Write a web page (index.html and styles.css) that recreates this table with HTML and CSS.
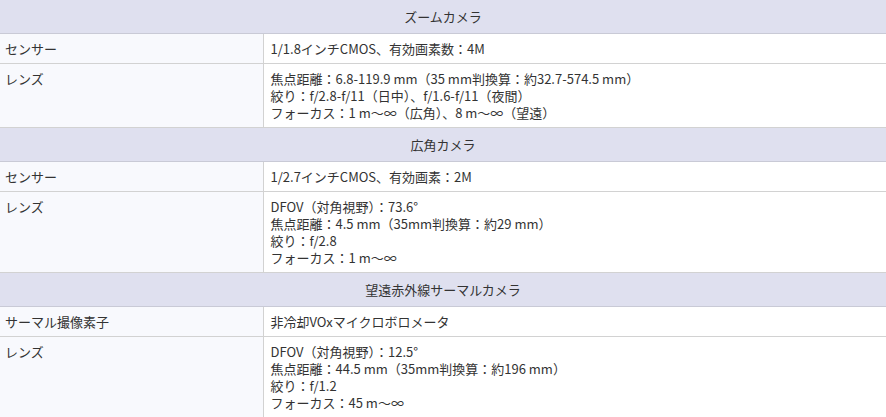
FILE: index.html
```html
<!DOCTYPE html>
<html lang="ja">
<head>
<meta charset="utf-8">
<link rel="stylesheet" href="styles.css">
</head>
<body>
<table class="spec">
  <colgroup>
    <col class="col-label">
    <col class="col-value">
  </colgroup>
  <tbody>
    <tr class="head"><th colspan="2">ズームカメラ</th></tr>
    <tr><td class="label">センサー</td><td class="value">1/1.8インチCMOS、有効画素数：4M</td></tr>
    <tr><td class="label">レンズ</td><td class="value"><div>焦点距離：6.8-119.9 mm（35 mm判換算：約32.7-574.5 mm）</div><div>絞り：f/2.8-f/11（日中）、f/1.6-f/11（夜間）</div><div>フォーカス：1 m～∞（広角）、8 m～∞（望遠）</div></td></tr>
    <tr class="head"><th colspan="2">広角カメラ</th></tr>
    <tr><td class="label">センサー</td><td class="value">1/2.7インチCMOS、有効画素：2M</td></tr>
    <tr><td class="label">レンズ</td><td class="value"><div>DFOV（対角視野）：73.6°</div><div>焦点距離：4.5 mm（35mm判換算：約29 mm）</div><div>絞り：f/2.8</div><div>フォーカス：1 m～∞</div></td></tr>
    <tr class="head"><th colspan="2">望遠赤外線サーマルカメラ</th></tr>
    <tr><td class="label">サーマル撮像素子</td><td class="value">非冷却VOxマイクロボロメータ</td></tr>
    <tr><td class="label">レンズ</td><td class="value"><div>DFOV（対角視野）：12.5°</div><div>焦点距離：44.5 mm（35mm判換算：約196 mm）</div><div>絞り：f/1.2</div><div>フォーカス：45 m～∞</div></td></tr>
  </tbody>
</table>
</body>
</html>
```
FILE: styles.css
```css
html, body {
  margin: 0;
  padding: 0;
  background: #ffffff;
}
body {
  font-family: "Noto Sans CJK JP", "Noto Sans", sans-serif;
  font-size: 13px;
  line-height: 17px;
  color: #333333;
}
.spec {
  width: 100%;
  border-collapse: collapse;
  table-layout: fixed;
}
.col-label {
  width: 263px;
}
.spec th {
  height: 17px;
  background: #dfe0ef;
  font-weight: normal;
  text-align: center;
  padding: 8px 5px 8px;
  border-bottom: 1px solid #c9cad6;
}
.spec td {
  vertical-align: top;
  padding: 6px 5px 6px;
  border-bottom: 1px solid #d2d2d2;
}
.spec .label {
  background: #f8f9fd;
  border-right: 1px solid #d2d2d2;
}
.spec .value {
  padding-left: 7px;
  background: #ffffff;
}
```
